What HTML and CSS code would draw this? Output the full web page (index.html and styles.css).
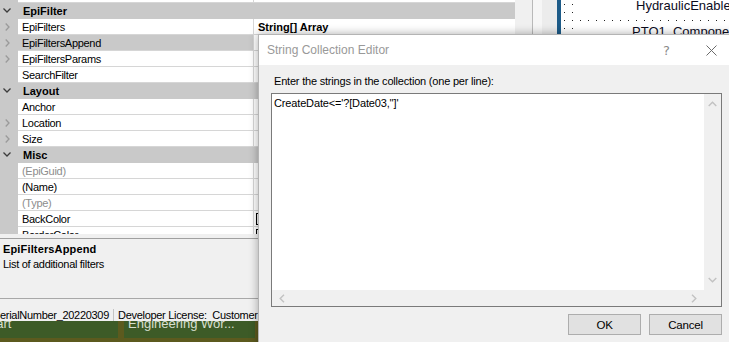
FILE: index.html
```html
<!DOCTYPE html>
<html>
<head>
<meta charset="utf-8">
<link rel="stylesheet" href="styles.css">
</head>
<body>
<div class="screen">
  <div class="top">
    <div class="props">
      <div class="grid">
        <div class="rows">
          <div class="row partial"><div class="gut"></div><div class="name"></div><div class="val"></div></div>
          <div class="cat"><div class="gut-cat"><svg width="8" height="5" viewBox="0 0 8 5"><polyline points="0.5,0.5 4,4 7.5,0.5" fill="none" stroke="#3c3c3c" stroke-width="1.3"/></svg></div><span class="cat-label">EpiFilter</span></div>
          <div class="row"><div class="gut"><svg width="5" height="8" viewBox="0 0 5 8"><polyline points="0.7,0.5 4,4 0.7,7.5" fill="none" stroke="#9a9a9a" stroke-width="1.3"/></svg></div><div class="name">EpiFilters</div><div class="val"><b>String[] Array</b></div></div>
          <div class="row sel"><div class="gut"><svg width="5" height="8" viewBox="0 0 5 8"><polyline points="0.7,0.5 4,4 0.7,7.5" fill="none" stroke="#9a9a9a" stroke-width="1.3"/></svg></div><div class="name">EpiFiltersAppend</div><div class="val"></div></div>
          <div class="row"><div class="gut"><svg width="5" height="8" viewBox="0 0 5 8"><polyline points="0.7,0.5 4,4 0.7,7.5" fill="none" stroke="#9a9a9a" stroke-width="1.3"/></svg></div><div class="name">EpiFiltersParams</div><div class="val"></div></div>
          <div class="row"><div class="gut"></div><div class="name">SearchFilter</div><div class="val"></div></div>
          <div class="cat"><div class="gut-cat"><svg width="8" height="5" viewBox="0 0 8 5"><polyline points="0.5,0.5 4,4 7.5,0.5" fill="none" stroke="#3c3c3c" stroke-width="1.3"/></svg></div><span class="cat-label">Layout</span></div>
          <div class="row"><div class="gut"></div><div class="name">Anchor</div><div class="val"></div></div>
          <div class="row"><div class="gut"><svg width="5" height="8" viewBox="0 0 5 8"><polyline points="0.7,0.5 4,4 0.7,7.5" fill="none" stroke="#9a9a9a" stroke-width="1.3"/></svg></div><div class="name">Location</div><div class="val"></div></div>
          <div class="row"><div class="gut"><svg width="5" height="8" viewBox="0 0 5 8"><polyline points="0.7,0.5 4,4 0.7,7.5" fill="none" stroke="#9a9a9a" stroke-width="1.3"/></svg></div><div class="name">Size</div><div class="val"></div></div>
          <div class="cat"><div class="gut-cat"><svg width="8" height="5" viewBox="0 0 8 5"><polyline points="0.5,0.5 4,4 7.5,0.5" fill="none" stroke="#3c3c3c" stroke-width="1.3"/></svg></div><span class="cat-label">Misc</span></div>
          <div class="row"><div class="gut"></div><div class="name dim">(EpiGuid)</div><div class="val"></div></div>
          <div class="row"><div class="gut"></div><div class="name">(Name)</div><div class="val"></div></div>
          <div class="row"><div class="gut"></div><div class="name dim">(Type)</div><div class="val"></div></div>
          <div class="row"><div class="gut"></div><div class="name">BackColor</div><div class="val"><span class="swatch"></span></div></div>
          <div class="row"><div class="gut"></div><div class="name">BorderColor</div><div class="val"><span class="swatch"></span></div></div>
        </div>
        <div class="gscroll"></div>
      </div>
      <div class="splitter"></div>
      <div class="desc">
        <div class="desc-title">EpiFiltersAppend</div>
        <div class="desc-text">List of additional filters</div>
      </div>
    </div>
    <div class="designer">
      <div class="dpanel-a"></div>
      <div class="dpanel-b"></div>
      <div class="dbar"></div>
      <div class="canvas">
        <svg class="dots" width="200" height="60">
          <defs>
            <pattern id="grid" x="11" y="4" width="8" height="8" patternUnits="userSpaceOnUse">
              <rect x="0" y="0" width="1" height="1" fill="#222"/>
            </pattern>
          </defs>
          <rect x="0" y="0" width="200" height="60" fill="url(#grid)"/>
        </svg>
        <div class="ctl ctl-1">HydraulicEnabled</div>
        <div class="ctl ctl-2">PTO1_ComponentType</div>
      </div>
    </div>
  </div>
  <div class="status">
    <span class="st-serial">SerialNumber_20220309</span>
    <span class="st-lic">Developer License:&nbsp; Customer</span>
  </div>
  <div class="taskbar">
    <div class="tile tile-1"><span class="tile-text tile-start">Start</span></div>
    <div class="tile tile-2"><span class="tile-text">Engineering Wor...</span></div>
  </div>

  <div class="dialog">
    <div class="titlebar">
      <span class="title">String Collection Editor</span>
      <span class="tbtn help">?</span>
      <span class="tbtn close"><svg width="11" height="11" viewBox="0 0 11 11"><path d="M0.5,0.5 L10.5,10.5 M10.5,0.5 L0.5,10.5" stroke="#6b6b6b" stroke-width="1" fill="none"/></svg></span>
    </div>
    <div class="dbody">
      <div class="prompt">Enter the strings in the collection (one per line):</div>
      <div class="textbox">
        <div class="tb-text">CreateDate&lt;='?[Date03,'']'</div>
        <div class="vscroll">
          <svg width="9" height="6" viewBox="0 0 9 6"><polyline points="0.7,5 4.5,1.2 8.3,5" fill="none" stroke="#c2c2c2" stroke-width="1.4"/></svg>
          <svg width="9" height="6" viewBox="0 0 9 6"><polyline points="0.7,1 4.5,4.8 8.3,1" fill="none" stroke="#c2c2c2" stroke-width="1.4"/></svg>
        </div>
        <div class="hscroll">
          <svg width="6" height="9" viewBox="0 0 6 9"><polyline points="5,0.7 1.2,4.5 5,8.3" fill="none" stroke="#c2c2c2" stroke-width="1.4"/></svg>
          <svg width="6" height="9" viewBox="0 0 6 9"><polyline points="1,0.7 4.8,4.5 1,8.3" fill="none" stroke="#c2c2c2" stroke-width="1.4"/></svg>
        </div>
        <div class="corner"></div>
      </div>
      <div class="buttons">
        <div class="btn">OK</div>
        <div class="btn">Cancel</div>
      </div>
    </div>
  </div>
</div>
</body>
</html>
```
FILE: styles.css
```css
* { box-sizing: border-box; }
html, body { margin: 0; padding: 0; background: #f0f0f0; }
body {
  font-family: "Liberation Sans", Arial, sans-serif;
  font-size: 11px;
  color: #000;
}
.screen {
  position: relative;
  width: 729px;
  height: 342px;
  overflow: hidden;
  display: flex;
  flex-direction: column;
}
.top {
  height: 298px;
  display: flex;
}
.props {
  width: 532px;
  display: flex;
  flex-direction: column;
}
.grid {
  height: 234px;
  display: flex;
  overflow: hidden;
}
.rows {
  width: 515px;
  display: flex;
  flex-direction: column;
  background: #fff;
}
.gscroll {
  width: 17px;
  background: #f0f0f0;
}
.row {
  display: flex;
  height: 16px;
  flex: none;
  line-height: 14px;
  letter-spacing: -0.3px;
}
.row.partial { height: 3px; }
.gut {
  width: 18px;
  background: #c9c9c9;
  display: flex;
  align-items: center;
  padding-left: 5px;
  padding-bottom: 1px;
}
.name {
  width: 236px;
  padding-left: 4px;
  padding-top: 1px;
  border-bottom: 1px solid #d6d6d6;
  border-right: 1px solid #d6d6d6;
  white-space: nowrap;
  overflow: hidden;
}
.val {
  flex: 1;
  padding-left: 4px;
  padding-top: 1px;
  border-bottom: 1px solid #d6d6d6;
  white-space: nowrap;
  overflow: hidden;
  display: flex;
  align-items: center;
}
.val b { letter-spacing: 0; }
.row.sel .name { background: #c9c9c9; }
.name.dim { color: #8d8d8d; }
.swatch {
  display: inline-block;
  width: 20px;
  height: 12px;
  margin-left: -2px;
  border: 1px solid #000;
  background: #f0f0f0;
}
.cat {
  display: flex;
  height: 16px;
  flex: none;
  background: #c9c9c9;
  line-height: 15px;
  padding-top: 1px;
}
.gut-cat {
  width: 18px;
  display: flex;
  align-items: center;
  padding-left: 3px;
  padding-bottom: 3px;
}
.cat-label {
  padding-left: 5px;
  font-weight: bold;
}
.splitter {
  height: 4px;
  background: #f0f0f0;
}
.desc {
  height: 60px;
  border-top: 1px solid #a0a0a0;
  background: #f0f0f0;
  padding: 3px 0 0 3px;
  line-height: 15px;
}
.desc-title { font-weight: bold; letter-spacing: 0.15px; }
.desc-text { letter-spacing: -0.3px; }

.designer {
  flex: 1;
  display: flex;
}
.dpanel-a {
  width: 10px;
  border-left: 1px solid #b9b9b9;
  background: #f6f6f6;
}
.dpanel-b {
  width: 15px;
  background: #ececec;
}
.dbar {
  width: 4px;
  background: #1d5b88;
}
.canvas {
  flex: 1;
  position: relative;
  background: #fff;
  overflow: hidden;
}
.dots { display: block; }
.ctl {
  position: absolute;
  left: 17px;
  right: 0;
  background: #fff;
  font-size: 13px;
  line-height: 15px;
  white-space: nowrap;
  overflow: hidden;
  color: #0c0c1e;
}
.ctl-1 { top: -2px; height: 20px; padding-left: 58px; }
.ctl-2 { top: 22px; height: 20px; padding-left: 54px; padding-top: 2px; }

.status {
  height: 23px;
  border-top: 1px solid #a8a8a8;
  background: #f0f0f0;
  display: flex;
  align-items: flex-start;
  padding-top: 10px;
  line-height: 12px;
  letter-spacing: -0.3px;
  white-space: nowrap;
}
.st-serial {
  margin-left: -7px;
  padding-right: 4px;
  border-right: 1px solid #c4c4c4;
}
.st-lic { padding-left: 4px; }

.taskbar {
  height: 21px;
  background: #5c5a1e;
  display: flex;
  gap: 6px;
}
.tile {
  height: 17px;
  background: #3d5b27;
  overflow: hidden;
  color: #d7dfcf;
  font-size: 13px;
  line-height: 6px;
  white-space: nowrap;
}
.tile-1 { width: 118px; }
.tile-2 { width: 131px; padding-left: 4px; }
.tile-text { display: block; }
.tile-start { margin-left: -16px; }

.dialog {
  position: absolute;
  left: 258px;
  top: 34px;
  width: 477px;
  height: 320px;
  border: 1px solid #b4b4b4;
  background: #f0f0f0;
  box-shadow: 0 0 9px rgba(0, 0, 0, 0.33);
  display: flex;
  flex-direction: column;
}
.titlebar {
  height: 30px;
  background: #fff;
  display: flex;
  align-items: center;
  padding-left: 8px;
}
.title {
  flex: 1;
  font-size: 12px;
  color: #999;
}
.tbtn {
  width: 46px;
  height: 30px;
  display: flex;
  align-items: center;
  justify-content: center;
  color: #8a8a8a;
}
.help { font-size: 13px; font-family: "DejaVu Sans", sans-serif; padding-left: 3px; }
.dbody {
  flex: 1;
  padding: 10px 12px 0 12px;
  display: flex;
  flex-direction: column;
}
.prompt {
  padding-left: 3px;
  line-height: 13px;
  letter-spacing: -0.2px;
  height: 13px;
}
.textbox {
  margin-top: 5px;
  height: 214px;
  border: 1px solid #7a7a7a;
  background: #fff;
  display: grid;
  grid-template-columns: 1fr 17px;
  grid-template-rows: 1fr 16px;
}
.tb-text {
  padding: 3px 2px;
  line-height: 13px;
  letter-spacing: -0.15px;
}
.vscroll {
  background: #f0f0f0;
  display: flex;
  flex-direction: column;
  justify-content: space-between;
  align-items: center;
  padding: 7px 0 7px 0;
}
.hscroll {
  background: #f0f0f0;
  display: flex;
  justify-content: space-between;
  align-items: center;
  padding: 0 7px 0 7px;
}
.corner { background: #f0f0f0; }
.buttons {
  margin-top: 7px;
  display: flex;
  justify-content: flex-end;
  gap: 8px;
}
.btn {
  width: 73px;
  height: 21px;
  background: #e1e1e1;
  border: 1px solid #adadad;
  display: flex;
  align-items: center;
  justify-content: center;
  font-size: 11.5px;
  letter-spacing: -0.2px;
}
```
